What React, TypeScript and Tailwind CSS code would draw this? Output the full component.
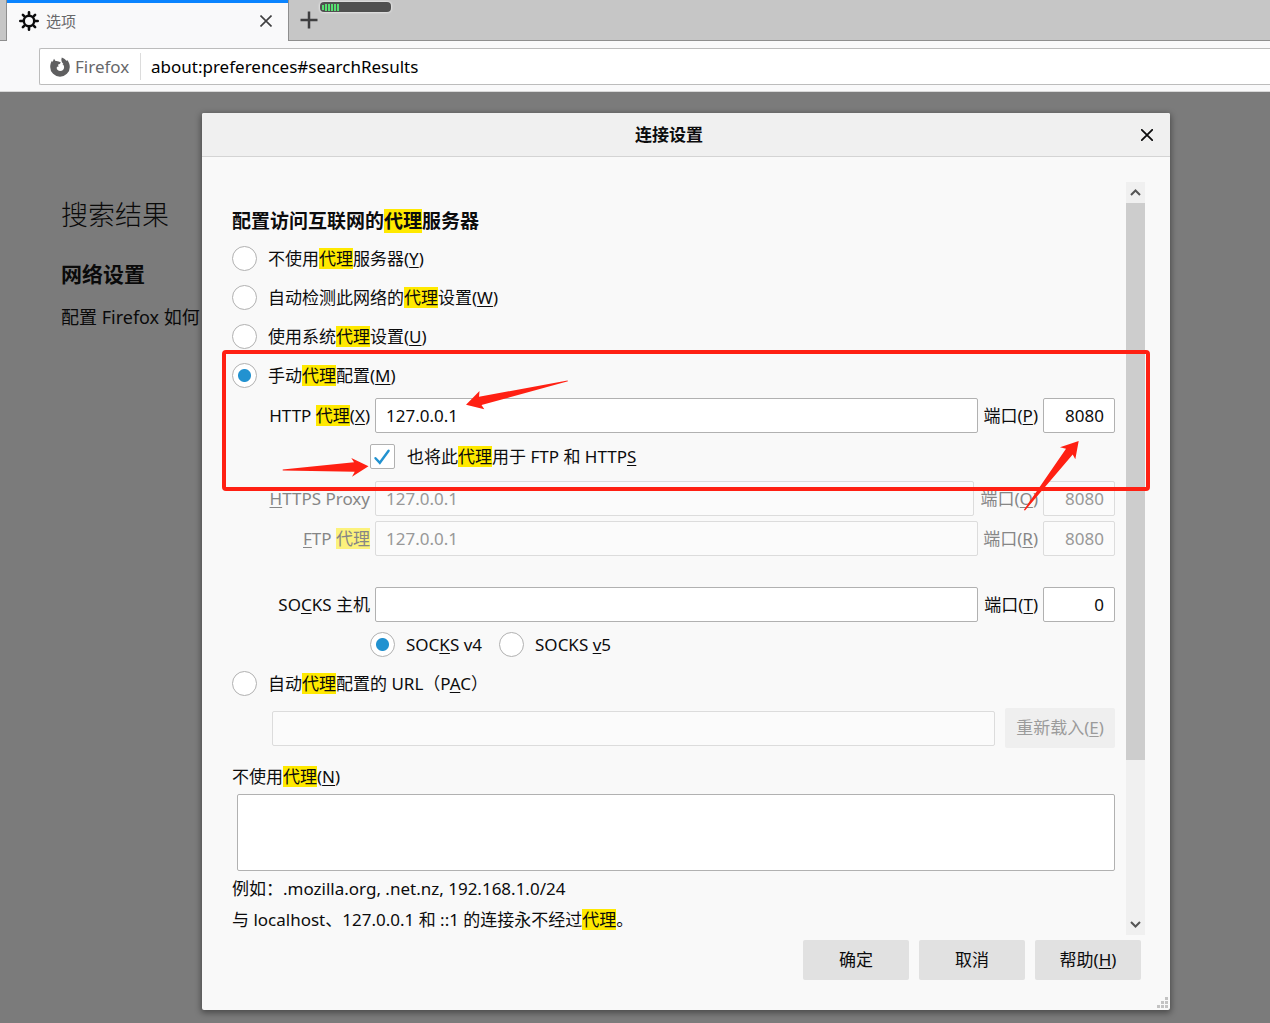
import type { ReactNode } from "react";

const textField =
  "h-[35px] min-w-0 rounded-[2px] border border-[#b1b1b1] bg-white px-2.5 text-[17px] text-[#0c0c0d] outline-none disabled:border-[#dcdcdc] disabled:bg-[#fbfbfb] disabled:text-[#989898]";
const button =
  "h-10 rounded-[2px] bg-[#e1e1e1] text-center text-[17px] text-[#0c0c0d] disabled:bg-[#efefef] disabled:text-[#9b9b9b]";

function Hit({ faded = false }: { faded?: boolean }) {
  return (
    <mark
      className={
        faded
          ? "inline-block bg-[#fcf27c] leading-[21px] text-inherit"
          : "inline-block bg-[#ffe900] leading-[21px] text-inherit"
      }
    >
      代理
    </mark>
  );
}

function Key({ children }: { children: ReactNode }) {
  return <span className="underline decoration-1 underline-offset-2">{children}</span>;
}

function Radio({ name, checked = false, children }: { name: string; checked?: boolean; children: ReactNode }) {
  return (
    <label className="flex h-[39px] items-center gap-[11px]">
      <input
        type="radio"
        name={name}
        defaultChecked={checked}
        className="m-0 size-[25px] shrink-0 appearance-none rounded-full border border-[#b1b1b1] bg-white bg-[radial-gradient(circle,#2292d0_6px,transparent_7px)] not-checked:bg-none"
      />
      <span className="whitespace-nowrap">{children}</span>
    </label>
  );
}

function HostRow({
  id,
  label,
  host,
  portLabel,
  port,
  disabled = false,
  wide = false,
  className,
}: {
  id: string;
  label: ReactNode;
  host: string;
  portLabel: string;
  port: string;
  disabled?: boolean;
  wide?: boolean;
  className: string;
}) {
  const tone = disabled ? "text-[#868686]" : "";
  return (
    <div className={`flex items-center gap-[5px] ${className} ${tone}`}>
      <label htmlFor={id} className="flex w-[138px] justify-end whitespace-nowrap">
        <span>{label}</span>
      </label>
      <input id={id} type="text" defaultValue={host} disabled={disabled} className={`${textField} flex-1`} />
      <label
        htmlFor={`${id}-port`}
        className={`${wide ? "w-[59px]" : "w-[55px]"} flex justify-end whitespace-nowrap`}
      >
        <span>
          端口(<Key>{portLabel}</Key>)
        </span>
      </label>
      <input
        id={`${id}-port`}
        type="text"
        defaultValue={port}
        disabled={disabled}
        className={`${textField} w-[72px] text-right`}
      />
    </div>
  );
}

function Gear() {
  return (
    <svg viewBox="0 0 20 20" className="size-5" fill="none" stroke="#0c0c0d" aria-hidden="true">
      <circle cx="10" cy="10" r="5.2" strokeWidth="2.4" />
      <path
        strokeWidth="2.6"
        strokeLinecap="round"
        d="M10 1.3v3M10 15.7v3M1.3 10h3M15.7 10h3M3.9 3.9l2 2M14.1 14.1l2 2M3.9 16.1l2-2M14.1 5.9l2-2"
      />
    </svg>
  );
}

function FirefoxMark() {
  return (
    <svg viewBox="0 0 20 20" className="size-5" fill="#5f5f60" aria-hidden="true">
      <path d="M11.800.4c2.200.7 3.800 2 4.700 3.700l.6-1.200c1.800 1.800 2.700 4.300 2.700 7a9.800 9.800 0 0 1-19.600 0c0-2.500.7-4.500 1.800-6.200l.6 1.200L4 1.800l1.500 2.300c1-.3 2.200-.1 3.100.5l2.100.6c-.1 1.200-1 1.900-2.600 2.200-.2.800.2 1.400.9 1.800-1.400 0-2.300.7-2.300 1.900 0 1.700 1.500 2.900 3.500 2.900 2.300 0 3.900-1.600 3.900-3.700 0-1.700-.7-2.700-1.800-3.300l1.100.1c-1.600-1.900-2.700-3.900-1.600-6.700z" />
    </svg>
  );
}

export default function App() {
  return (
    <div className="flex min-h-screen flex-col overflow-hidden bg-[#7b7b7b] font-['Noto_Sans','Noto_Sans_CJK_SC',sans-serif] text-[17px] text-[#0c0c0d]">
      <header>
        <div className="relative flex h-[41px] bg-[#c6c6c6]">
          <div className="w-[7px] border-r border-b border-[#8e8e8e]" />
          <div className="flex w-[281px] items-center border-t-3 border-[#0a84ff] bg-[#f9f9fa] pr-[15px] pb-0.5 pl-3">
            <Gear />
            <span className="ml-[7px] flex-1 text-[15px] text-[#68686a]">选项</span>
            <button aria-label="关闭标签页" className="p-px">
              <svg viewBox="0 0 12 12" className="size-3" stroke="#3f3f40" strokeWidth="1.6" aria-hidden="true">
                <path d="M.5.5l11 11M11.500.5l-11 11" />
              </svg>
            </button>
          </div>
          <div className="flex flex-1 items-center border-b border-l border-[#8e8e8e] pl-[11px]">
            <button aria-label="新建标签页">
              <svg viewBox="0 0 18 18" className="size-[18px]" stroke="#3f3f40" strokeWidth="2.500" aria-hidden="true">
                <path d="M9 .5v17M.5 9h17" />
              </svg>
            </button>
          </div>
          <div className="absolute top-0.5 left-80 flex h-2.5 w-[71px] items-center gap-px rounded-[4px] bg-[#505050] pl-0.5 shadow-[0_0_2px_1px_#e4e4e4]">
            <span className="h-[5px] w-0.5 bg-[#55e070]" />
            <span className="h-[7px] w-0.5 bg-[#55e070]" />
            <span className="h-[7px] w-0.5 bg-[#55e070]" />
            <span className="h-[7px] w-0.5 bg-[#55e070]" />
            <span className="h-[7px] w-0.5 bg-[#55e070]" />
            <span className="h-[7px] w-0.5 bg-[#55e070]" />
          </div>
        </div>
        <div className="flex h-[51px] border-b border-[#d8d8d8] bg-[#f9f9fa] pt-[7px] pl-[39px]">
          <div className="flex h-[37px] flex-1 items-center rounded-l-[2px] border border-r-0 border-[#bcbcbc] bg-white pl-2.5">
            <FirefoxMark />
            <span className="ml-[5px] w-[65px] text-[17px] text-[#68686a]">Firefox</span>
            <input
              aria-label="地址"
              type="text"
              defaultValue="about:preferences#searchResults"
              className="h-[27px] min-w-0 flex-1 border-l border-[#dcdcdc] bg-transparent pl-2.5 text-[17px] text-black outline-none"
            />
          </div>
        </div>
      </header>

      <div className="relative flex-1">
        <main className="absolute top-0 left-0 pt-[104px] pl-[61px] whitespace-nowrap text-[#0a0a0a]">
          <h1 className="text-[27px] leading-[38px] font-light">搜索结果</h1>
          <h2 className="mt-[25px] text-[21px] leading-[30px] font-bold">网络设置</h2>
          <p className="mt-[15px] text-[18px] leading-[26px]">配置 Firefox 如何</p>
        </main>

        <div className="relative pt-[21px] pr-[100px] pb-[13px] pl-[202px]">
          <section
            role="dialog"
            aria-labelledby="title"
            className="relative rounded-[2px] bg-[#f9f9f9] shadow-[0_2px_6px_1px_rgba(0,0,0,0.4)]"
          >
            <div className="relative flex h-11 items-center justify-center rounded-t-[2px] border-b border-[#d4d4d4] bg-[#f0f0f0]">
              <h2 id="title" className="pr-[34px] font-bold">
                连接设置
              </h2>
              <button aria-label="关闭" className="absolute right-4 p-px">
                <svg viewBox="0 0 12 12" className="size-3" stroke="#0c0c0d" strokeWidth="1.800" strokeLinecap="round" aria-hidden="true">
                  <path d="M.8.8l10.400 10.400M11.200.8L.8 11.200" />
                </svg>
              </button>
            </div>

            <div className="flex pt-[25px] pr-[25px] pl-[30px]">
              <form className="min-w-0 flex-1 pt-[27px] pr-[11px]">
                <h3 className="mb-1.5 flex h-6 items-center text-[19px] leading-6 font-bold">
                  配置访问互联网的
                  <mark className="bg-[#ffe900] text-inherit">代理</mark>
                  服务器
                </h3>
                <Radio name="proxy">
                  不使用
                  <Hit />
                  服务器(<Key>Y</Key>)
                </Radio>
                <Radio name="proxy">
                  自动检测此网络的
                  <Hit />
                  设置(<Key>W</Key>)
                </Radio>
                <Radio name="proxy">
                  使用系统
                  <Hit />
                  设置(<Key>U</Key>)
                </Radio>
                <Radio name="proxy" checked>
                  手动
                  <Hit />
                  配置(<Key>M</Key>)
                </Radio>

                <HostRow
                  id="http"
                  className="mt-[3px]"
                  label={
                    <>
                      HTTP <Hit />(<Key>X</Key>)
                    </>
                  }
                  host="127.0.0.1"
                  portLabel="P"
                  port="8080"
                />
                <label className="mt-[11px] ml-[138px] flex h-[25px] items-center gap-3">
                  <span className="relative flex">
                    <input
                      type="checkbox"
                      defaultChecked
                      className="m-0 size-[25px] appearance-none rounded-[2px] border border-[#b1b1b1] bg-white"
                    />
                    <svg
                      viewBox="0 0 25 25"
                      className="pointer-events-none absolute inset-0 size-[25px]"
                      fill="none"
                      stroke="#2292d0"
                      strokeWidth="2.4"
                      strokeLinecap="round"
                      aria-hidden="true"
                    >
                      <path d="M5.500 14.200l4.300 4.600L18.600 6.800" />
                    </svg>
                  </span>
                  <span>
                    也将此
                    <Hit />
                    用于 FTP 和 HTTP<Key>S</Key>
                  </span>
                </label>
                <HostRow
                  id="https"
                  className="mt-3"
                  disabled
                  wide
                  label={
                    <>
                      <Key>H</Key>TTPS Proxy
                    </>
                  }
                  host="127.0.0.1"
                  portLabel="O"
                  port="8080"
                />
                <HostRow
                  id="ftp"
                  className="mt-[5px]"
                  disabled
                  label={
                    <>
                      <Key>F</Key>TP <Hit faded />
                    </>
                  }
                  host="127.0.0.1"
                  portLabel="R"
                  port="8080"
                />
                <HostRow
                  id="socks"
                  className="mt-[31px]"
                  label={
                    <>
                      SO<Key>C</Key>KS 主机
                    </>
                  }
                  host=""
                  portLabel="T"
                  port="0"
                />
                <div className="mt-[3px] ml-[138px] flex gap-[17px]">
                  <Radio name="socks" checked>
                    SOC<Key>K</Key>S v4
                  </Radio>
                  <Radio name="socks">
                    SOCKS <Key>v</Key>5
                  </Radio>
                </div>
                <Radio name="proxy">
                  自动
                  <Hit />
                  配置的 URL（P<Key>A</Key>C）
                </Radio>
                <div className="mt-[5px] ml-10 flex items-center gap-2.5">
                  <input aria-label="URL" type="text" disabled className={`${textField} flex-1`} />
                  <button type="button" disabled className={`${button} w-[110px]`}>
                    重新载入(<Key>E</Key>)
                  </button>
                </div>

                <label htmlFor="exceptions" className="mt-[17px] block h-6 leading-6">
                  不使用
                  <Hit />(<Key>N</Key>)
                </label>
                <div className="mt-[5px] flex pl-[5px]">
                  <textarea
                    id="exceptions"
                    className="h-[77px] flex-1 resize-none rounded-[2px] border border-[#b1b1b1] bg-white p-2 outline-none"
                  />
                </div>
                <p className="mt-0.5 leading-[31px]">例如：.mozilla.org, .net.nz, 192.168.1.0/24</p>
                <p className="leading-[31px]">
                  与 localhost、127.0.0.1 和 ::1 的连接永不经过
                  <Hit />。
                </p>
              </form>

              <div className="flex w-[19px] flex-col items-center bg-[#f0f0f0]" aria-hidden="true">
                <svg viewBox="0 0 19 21" className="h-[21px] w-[19px]" fill="none" stroke="#555" strokeWidth="2">
                  <path d="M5 13l4.500-4.500L14 13" />
                </svg>
                <div className="h-[557px] w-full bg-[#cdcdcd]" />
                <div className="flex-1" />
                <svg viewBox="0 0 19 21" className="h-[21px] w-[19px]" fill="none" stroke="#555" strokeWidth="2">
                  <path d="M5 8l4.500 4.500L14 8" />
                </svg>
              </div>
            </div>

            <div className="mt-[5px] flex justify-end gap-2.5 pr-[29px] pb-[30px]">
              <button className={`${button} w-[106px]`}>确定</button>
              <button className={`${button} w-[106px]`}>取消</button>
              <button className={`${button} w-[106px]`}>
                帮助(<Key>H</Key>)
              </button>
            </div>

            <svg viewBox="0 0 11 11" className="absolute right-[2px] bottom-[2px] size-[11px]" fill="#c3c3c3" aria-hidden="true">
              <path d="M8 0h3v3H8zM4 4h3v3H4zM8 4h3v3H8zM0 8h3v3H0zM4 8h3v3H4zM8 8h3v3H8z" />
            </svg>

            <div className="pointer-events-none absolute top-[237px] right-5 left-5 h-[141px] rounded-[4px] border-4 border-[#ff2013]" />
            <svg viewBox="0 0 104 30" className="pointer-events-none absolute top-[267px] left-[264px] h-[30px] w-[104px]" fill="#ff2013" aria-hidden="true">
              <path d="M0 24.700L13.500 11l-.5 5.700L101.500.6l.5.700L15.500 25l2.800 4.300z" />
            </svg>
            <svg viewBox="0 0 88 20" className="pointer-events-none absolute top-[345px] left-20 h-5 w-[88px]" fill="#ff2013" aria-hidden="true">
              <path d="M.7 11.500L72 4.300 69.300 0 86.500 8.200 70 18.700l2.700-4.900L.7 12.500z" />
            </svg>
            <svg viewBox="0 0 56 70" className="pointer-events-none absolute top-[328px] right-[91px] h-[70px] w-14" fill="#ff2013" aria-hidden="true">
              <path d="M55.700 0L37 6.300l6 1.400L.8 69l1.200.5L49.700 13.500l2.600 4.700z" />
            </svg>
          </section>
        </div>
      </div>
    </div>
  );
}
